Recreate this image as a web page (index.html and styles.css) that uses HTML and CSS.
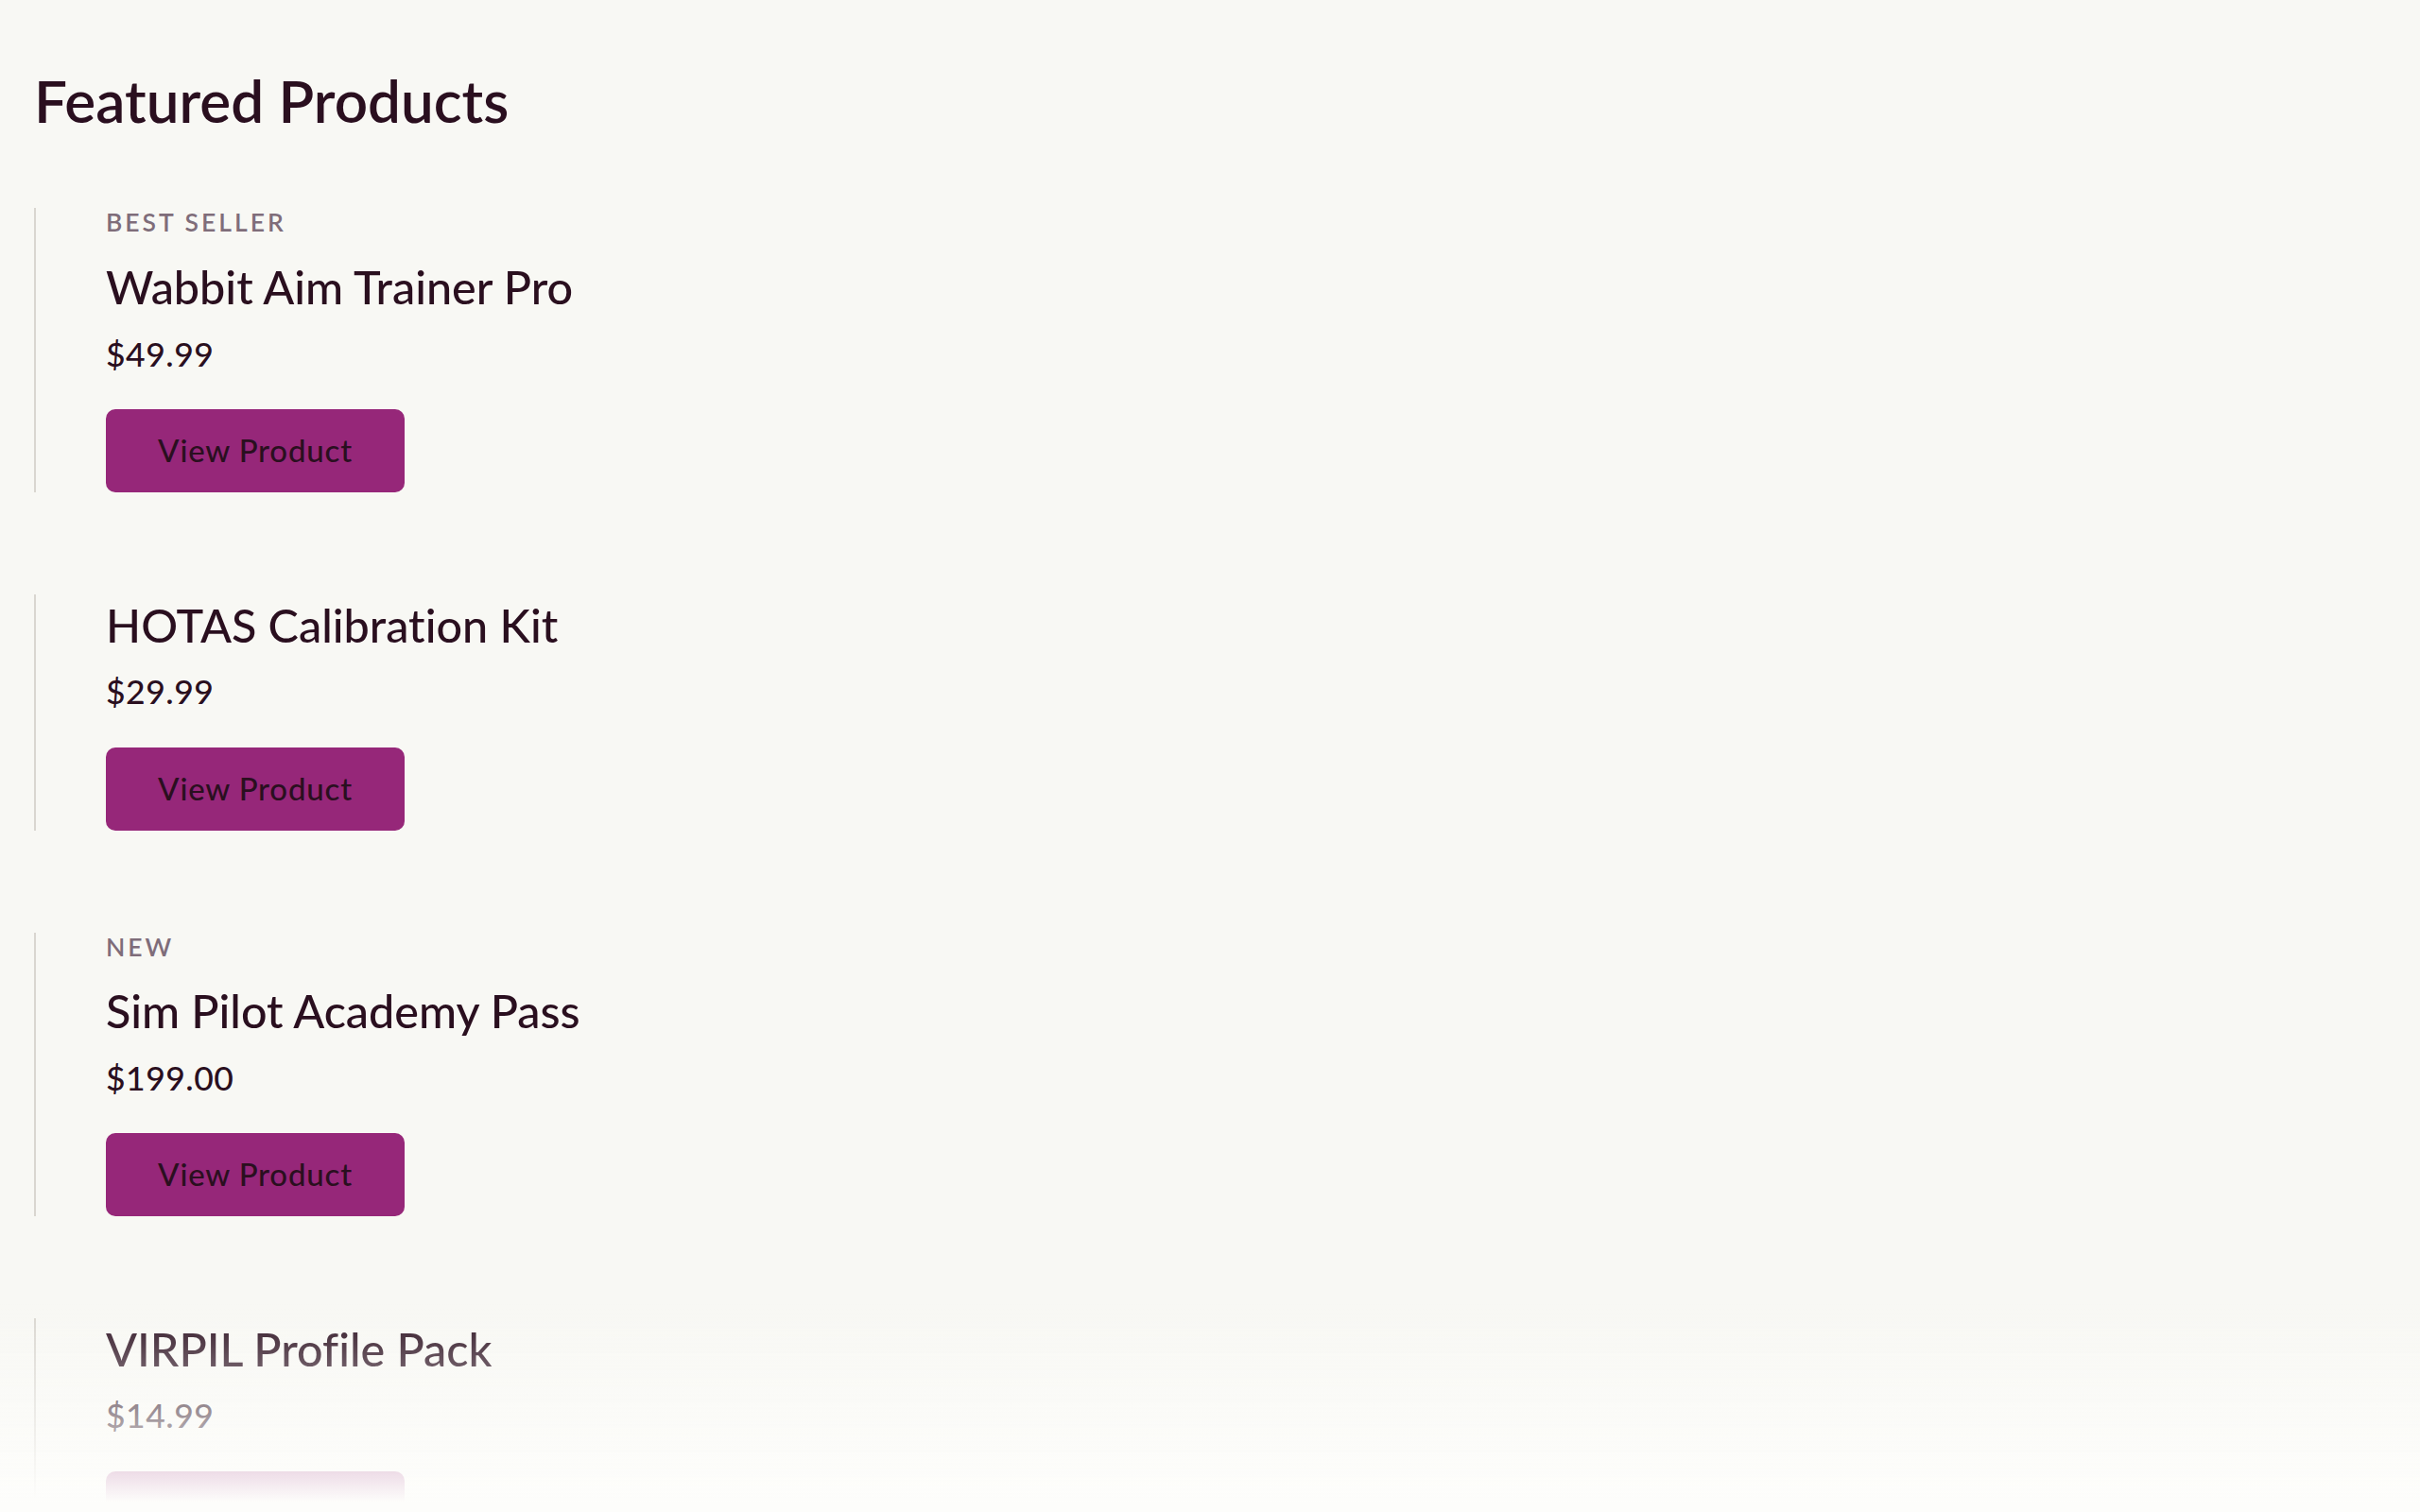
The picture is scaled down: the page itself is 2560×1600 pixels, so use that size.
FILE: index.html
```html
<!DOCTYPE html>
<html lang="en">
<head>
<meta charset="UTF-8">
<title>Featured Products</title>
<link rel="stylesheet" href="styles.css">
</head>
<body>

<main class="featured">
    <h1 class="featured-title">Featured Products</h1>

    <!-- product list -->
    <div class="product-list">
        <div class="product">
            <div class="product-tag">Best Seller</div>
            <h2 class="product-name">Wabbit Aim Trainer Pro</h2>
            <div class="product-price">$49.99</div>
            <button class="product-btn">View Product</button>
        </div>

        <div class="product">
            <h2 class="product-name">HOTAS Calibration Kit</h2>
            <div class="product-price">$29.99</div>
            <button class="product-btn">View Product</button>
        </div>

        <div class="product">
            <div class="product-tag">New</div>
            <h2 class="product-name">Sim Pilot Academy Pass</h2>
            <div class="product-price">$199.00</div>
            <button class="product-btn">View Product</button>
        </div>

        <div class="product">
            <h2 class="product-name">VIRPIL Profile Pack</h2>
            <div class="product-price">$14.99</div>
            <button class="product-btn">View Product</button>
        </div>
    </div>
</main>

<!-- bottom fade -->
<div class="fade"></div>

</body>
</html>
```

FILE: styles.css
```css
body {
margin: 0;
background: #f8f8f4;
color: #2a0f1f;
font-family: "Lato", "Liberation Sans", sans-serif;
font-variant-ligatures: no-common-ligatures;
font-feature-settings: "liga" 0;
}

.featured {
padding: 69px 36px 200px;
}

.featured-title {
margin: 0 0 77px;
font-size: 62px;
font-weight: 600;
line-height: 1.2;
}

.product-list {
display: flex;
flex-direction: column;
gap: 108px;
}

.product {
display: flex;
flex-direction: column;
align-items: flex-start;
border-left: 2px solid #d9d6d0;
padding-left: 74px;
}

.product-tag {
margin-bottom: 19px;
font-size: 26.5px;
font-weight: 600;
line-height: 1.2;
letter-spacing: 3px;
text-transform: uppercase;
color: #7f6d7a;
}

.product-name {
margin: 0;
font-size: 48.5px;
font-weight: 500;
line-height: 1.35;
}

.product-price {
margin-top: 17px;
font-size: 35.5px;
font-weight: 500;
line-height: 1.2;
letter-spacing: 0.5px;
}

.product-btn {
margin-top: 37px;
width: 316px;
padding: 24px 0;
border: none;
border-radius: 10px;
background: #962779;
color: #2a0f1f;
font-family: inherit;
font-size: 33px;
font-weight: 500;
line-height: 1.2;
letter-spacing: 0.8px;
cursor: pointer;
}

.fade {
position: fixed;
left: 0;
right: 0;
bottom: 0;
height: 220px;
background: linear-gradient(rgba(253,253,251,0), #fdfdfb 95%);
pointer-events: none;
}
```
